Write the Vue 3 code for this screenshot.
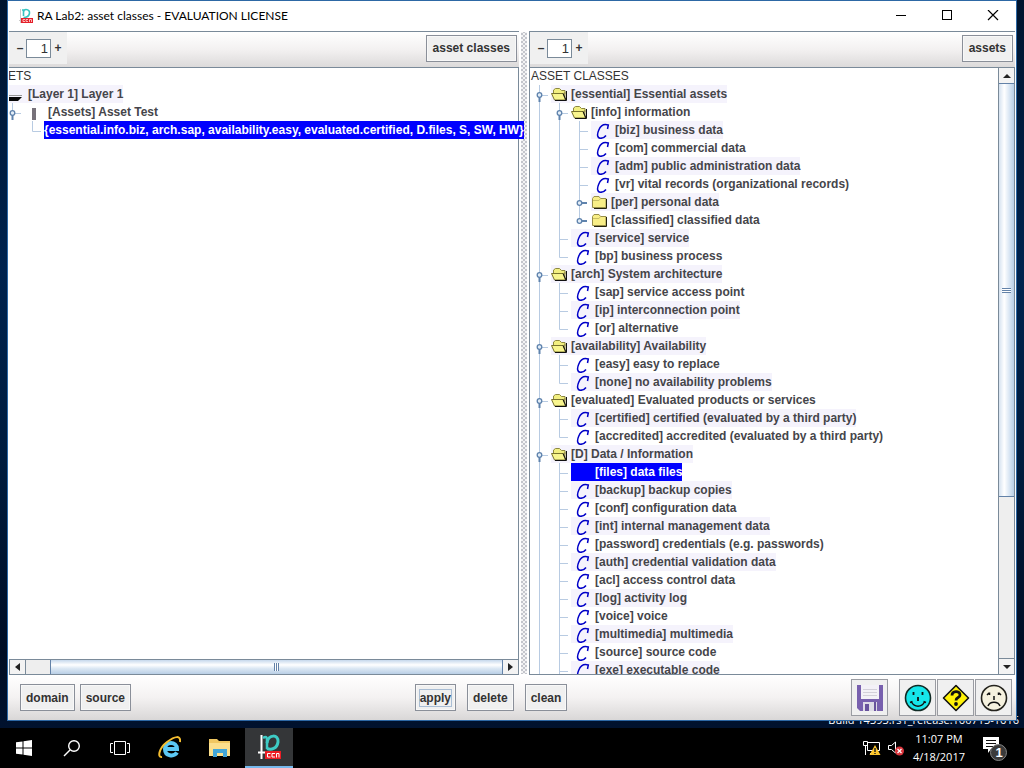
<script setup>
import { ref } from 'vue'

const leftDepth = ref('1')
const rightDepth = ref('1')

// guides: one letter per 20px column.
// v = vertical line, t = branch, l = last branch, o = open handle, h = open handle on a last branch,
// c = closed handle, e = closed handle on a last branch, s = space
const assets = [
  { guides: '', kind: 'root', text: 'ASSETS' },
  { guides: 's', kind: 'layer', text: '[Layer 1] Layer 1', tint: true },
  { guides: 'sh', kind: 'asset', text: '[Assets] Asset Test' },
  { guides: 'ssl', kind: 'plain', text: '{essential.info.biz, arch.sap, availability.easy, evaluated.certified, D.files, S, SW, HW}', selected: true },
]

const classes = [
  { guides: '', kind: 'root', text: 'ASSET CLASSES' },
  { guides: 'o', kind: 'open', text: '[essential] Essential assets', tint: true },
  { guides: 'vo', kind: 'open', text: '[info] information' },
  { guides: 'vvt', kind: 'leaf', text: '[biz] business data', tint: true },
  { guides: 'vvt', kind: 'leaf', text: '[com] commercial data' },
  { guides: 'vvt', kind: 'leaf', text: '[adm] public administration data', tint: true },
  { guides: 'vvt', kind: 'leaf', text: '[vr] vital records (organizational records)' },
  { guides: 'vvc', kind: 'closed', text: '[per] personal data', tint: true },
  { guides: 'vve', kind: 'closed', text: '[classified] classified data' },
  { guides: 'vt', kind: 'leaf', text: '[service] service', tint: true },
  { guides: 'vl', kind: 'leaf', text: '[bp] business process' },
  { guides: 'o', kind: 'open', text: '[arch] System architecture', tint: true },
  { guides: 'vt', kind: 'leaf', text: '[sap] service access point' },
  { guides: 'vt', kind: 'leaf', text: '[ip] interconnection point', tint: true },
  { guides: 'vl', kind: 'leaf', text: '[or] alternative' },
  { guides: 'o', kind: 'open', text: '[availability] Availability', tint: true },
  { guides: 'vt', kind: 'leaf', text: '[easy] easy to replace' },
  { guides: 'vl', kind: 'leaf', text: '[none] no availability problems', tint: true },
  { guides: 'o', kind: 'open', text: '[evaluated] Evaluated products or services' },
  { guides: 'vt', kind: 'leaf', text: '[certified] certified (evaluated by a third party)', tint: true },
  { guides: 'vl', kind: 'leaf', text: '[accredited] accredited (evaluated by a third party)' },
  { guides: 'o', kind: 'open', text: '[D] Data / Information', tint: true },
  { guides: 'vt', kind: 'leaf', text: '[files] data files', selected: true },
  { guides: 'vt', kind: 'leaf', text: '[backup] backup copies', tint: true },
  { guides: 'vt', kind: 'leaf', text: '[conf] configuration data' },
  { guides: 'vt', kind: 'leaf', text: '[int] internal management data', tint: true },
  { guides: 'vt', kind: 'leaf', text: '[password] credentials (e.g. passwords)' },
  { guides: 'vt', kind: 'leaf', text: '[auth] credential validation data', tint: true },
  { guides: 'vt', kind: 'leaf', text: '[acl] access control data' },
  { guides: 'vt', kind: 'leaf', text: '[log] activity log', tint: true },
  { guides: 'vt', kind: 'leaf', text: '[voice] voice' },
  { guides: 'vt', kind: 'leaf', text: '[multimedia] multimedia', tint: true },
  { guides: 'vt', kind: 'leaf', text: '[source] source code' },
  { guides: 'vt', kind: 'leaf', text: '[exe] executable code', tint: true },
]

const panes = [
  { id: 'assets', depth: leftDepth, button: 'asset classes', rows: assets },
  { id: 'classes', depth: rightDepth, button: 'assets', rows: classes },
]

const linePaths = {
  v: 'M8.5 0V18',
  t: 'M8.5 0V18M8.5 10.5H17',
  l: 'M8.5 0V10.5H17',
  o: 'M8.5 0V18M11 10.5H17',
  h: 'M8.5 0V8M11 10.5H17',
  c: 'M8.5 0V18',
  e: 'M8.5 0V10',
  s: '',
}
</script>

<template>
  <div class="desktop">
    <p class="watermark">Build 14393.rs1_release.160715-1616</p>
    <section class="window">
      <header class="titlebar">
        <svg class="app-icon" width="15" height="16" viewBox="0 0 15 16" aria-hidden="true">
          <path d="M2.500 1v14M1 12.500h4" stroke="#c9c9c9" fill="none" />
          <path d="M4 2h1.500v6M5.500 9.500c7 0 8-8 2.500-8-1.500 0-2.500 1-2.500 3" stroke="#35c4c0" stroke-width="1.600" fill="none" />
          <rect x="3" y="10" width="12" height="5" fill="#e3202a" />
          <path d="M7 11.500H5v2h2M10 11.500H8v2h2M11.500 14v-2.500h2V14" stroke="#ffb9b9" fill="none" />
        </svg>
        <h1>RA Lab2: asset classes - EVALUATION LICENSE</h1>
        <button class="win-btn" aria-label="Minimize">
          <svg width="12" height="12" viewBox="0 0 12 12"><path d="M1 5.500h10" stroke="#000" /></svg>
        </button>
        <button class="win-btn" aria-label="Maximize">
          <svg width="12" height="12" viewBox="0 0 12 12"><rect x="1.500" y="0.500" width="9" height="9" fill="none" stroke="#000" /></svg>
        </button>
        <button class="win-btn" aria-label="Close">
          <svg width="12" height="12" viewBox="0 0 12 12"><path d="M1 0l10 10M11 0L1 10" stroke="#000" stroke-width="1.200" /></svg>
        </button>
      </header>

      <main class="panes">
        <template v-for="pane in panes" :key="pane.id">
          <div v-if="pane.id === 'classes'" class="splitter" role="separator"></div>
          <section class="pane" :class="pane.id">
            <div class="toolbar">
              <div class="stepper">
                <button class="step" aria-label="Less">–</button>
                <input v-model="pane.depth.value" type="text" aria-label="Depth" />
                <button class="step more" aria-label="More">+</button>
              </div>
              <button class="btn">{{ pane.button }}</button>
            </div>
            <div class="view">
              <div class="clip">
                <ul class="tree" role="tree">
                  <li v-for="row in pane.rows" :key="row.text" class="row" role="treeitem">
                    <svg v-for="(g, i) in row.guides" :key="i" class="guide" width="20" height="18" viewBox="0 0 20 18">
                      <path :d="linePaths[g]" fill="none" stroke="#b8cbe2" />
                      <template v-if="g === 'o' || g === 'h'">
                        <path d="M8.500 12v5" stroke="#5f83ad" stroke-width="2" />
                        <circle cx="8.500" cy="10" r="2.300" fill="#e4eef8" stroke="#5f83ad" stroke-width="1.300" />
                      </template>
                      <template v-if="g === 'c' || g === 'e'">
                        <path d="M10 10h6" stroke="#5f83ad" stroke-width="2" />
                        <circle cx="8.500" cy="10" r="2.300" fill="#e4eef8" stroke="#5f83ad" stroke-width="1.300" />
                      </template>
                    </svg>
                    <span class="label" :class="[row.kind, { tint: row.tint, selected: row.selected }]">
                      <svg v-if="row.kind === 'open'" width="20" height="18" viewBox="0 0 20 18">
                        <path d="M2.500 9V5L4.500 3.500h4L10.500 5.500h3.500V9" fill="#f2ef80" stroke="#8d8840" />
                        <path d="M.5 8.500h11.500l2.500 6.500H3.500z" fill="#f8f58e" stroke="#77722e" />
                        <path d="M14.500 6.500v8.500L12 8.500" fill="#99944a" />
                        <path d="M15.500 6v9.500H4M12 8.500l3 6.500" fill="none" stroke="#111" />
                      </svg>
                      <svg v-else-if="row.kind === 'closed'" width="20" height="18" viewBox="0 0 20 18">
                        <path d="M1.500 14.500v-9l1.500-2h5l1.500 2h5.500v9z" fill="#f8ee87" stroke="#99904b" />
                        <path d="M2 7.500h6l1.500-2" fill="none" stroke="#c9bf65" />
                        <path d="M15.500 6v9.500H3" fill="none" stroke="#24220e" />
                      </svg>
                      <svg v-else-if="row.kind === 'leaf'" width="24" height="18" viewBox="0 0 24 18">
                        <path v-if="!row.selected" d="M16.500 8l.8-4C12.500 2.500 9.500 5 7.800 9C5.600 14 6.500 17.300 9.500 17.300C12 17.300 13.500 16.500 15 14.500" fill="none" stroke="#0000c8" stroke-width="1.500" />
                      </svg>
                      <svg v-else-if="row.kind === 'layer'" width="24" height="18" viewBox="0 0 24 18">
                        <path d="M4 10.500h14" stroke="#999" />
                        <path d="M4 12h14l-4 4H5z" fill="#080808" />
                      </svg>
                      <svg v-else-if="row.kind === 'asset'" width="24" height="18" viewBox="0 0 24 18">
                        <path d="M8 5h4v12H8z" fill="#77727a" />
                      </svg>
                      <span>{{ row.text }}</span>
                    </span>
                  </li>
                </ul>
              </div>
              <div class="scroll">
                <button aria-label="Scroll back"><i class="arrow back"></i></button>
                <div class="track"><div class="thumb"><i></i></div></div>
                <button aria-label="Scroll forward"><i class="arrow forward"></i></button>
              </div>
            </div>
          </section>
        </template>
      </main>

      <footer class="actions">
        <div class="group">
          <button class="btn">domain</button>
          <button class="btn">source</button>
        </div>
        <div class="group middle">
          <button class="btn focused"><span>apply</span></button>
          <button class="btn">delete</button>
          <button class="btn">clean</button>
        </div>
        <div class="group icons">
          <button class="pic save" aria-label="Save">
            <svg width="28" height="28" viewBox="0 0 28 28">
              <path d="M1 1h26v26H4l-3-3z" fill="#7860ae" />
              <path d="M5 1h18v14H5z" fill="#f3f1f7" />
              <path d="M7 5.500h14M7 8.500h14M7 11.500h14" stroke="#d3d0da" />
              <path d="M7 18h14v9H7z" fill="#dedbe6" />
              <path d="M9 20h4v7H9zM18 18h2v9h-2z" fill="#68529c" />
            </svg>
          </button>
          <button class="pic" aria-label="Satisfied">
            <svg width="28" height="28" viewBox="0 0 28 28">
              <circle cx="14" cy="14" r="12.500" fill="#16e6ea" stroke="#102a24" stroke-width="1.600" />
              <path d="M9.500 8v3M18.500 8v3M14 13v4" stroke="#111" stroke-width="1.800" />
              <path d="M7.500 18c3 5.500 10 5.500 13 0M6 18.500l2.500-1M22 18.500l-2.500-1" fill="none" stroke="#111" stroke-width="1.500" />
            </svg>
          </button>
          <button class="pic" aria-label="Help">
            <svg width="28" height="28" viewBox="0 0 28 28">
              <path d="M14 1.500L26.500 14 14 26.500 1.500 14z" fill="#fff208" stroke="#111" stroke-width="1.600" stroke-linejoin="round" />
              <path d="M10 11.500c0-5 8-5 8-.500 0 3-4 2-4 5.500" fill="none" stroke="#111" stroke-width="2.800" />
              <circle cx="14" cy="20" r="1.900" fill="#111" />
            </svg>
          </button>
          <button class="pic" aria-label="Dissatisfied">
            <svg width="28" height="28" viewBox="0 0 28 28">
              <circle cx="14" cy="14" r="12.500" fill="#f6f2df" stroke="#24231d" stroke-width="1.600" />
              <path d="M9.500 8.500v2.500M18.500 8.500v2.500M14 12v4M7 11l2-2M21 11l-2-2" stroke="#111" stroke-width="1.500" />
              <path d="M8 22c2-5 10-5 12 0" fill="none" stroke="#111" stroke-width="1.600" />
            </svg>
          </button>
        </div>
      </footer>
    </section>

    <nav class="taskbar">
      <button class="task" aria-label="Start">
        <svg width="16" height="16" viewBox="0 0 16 16"><path d="M0 2.300l6.500-.9v6.100H0zM7.500 1.200L16 0v7.500H7.500zM0 8.500h6.500v6.100L0 13.700zM7.500 8.500H16V16l-8.500-1.200z" fill="#fff" /></svg>
      </button>
      <button class="task" aria-label="Search">
        <svg width="18" height="18" viewBox="0 0 18 18"><circle cx="11" cy="7" r="5.300" fill="none" stroke="#fff" stroke-width="1.400" /><path d="M7 11l-6 6" stroke="#fff" stroke-width="1.500" /></svg>
      </button>
      <button class="task" aria-label="Task view">
        <svg width="20" height="16" viewBox="0 0 20 16"><path d="M4.500 1.500h11v13h-11zM3 3.500H.5v9H3M17 3.500h2.500v9H17" fill="none" stroke="#fff" /></svg>
      </button>
      <button class="task wide" aria-label="Internet Explorer">
        <svg width="24" height="24" viewBox="0 0 24 24">
          <path d="M8 13h12c0-8-12-8-12 0 0 7.500 9 8 12 3.500" fill="none" stroke="#5cc8f4" stroke-width="4" />
          <path d="M5 21C0 22 2 12 10 6S24-1 23 6" fill="none" stroke="#f4bd30" stroke-width="2" />
        </svg>
      </button>
      <button class="task wide" aria-label="File Explorer">
        <svg width="24" height="24" viewBox="0 0 24 24">
          <path d="M2 3h8l2 2h11v15H2z" fill="#f0c761" />
          <path d="M2 7h21v13H2z" fill="#fbdf8c" />
          <path d="M6 21v-8h14v8h-4v-4h-6v4z" fill="#42a6d8" />
        </svg>
      </button>
      <button class="task wide active" aria-label="RA Lab2">
        <svg width="26" height="26" viewBox="0 0 26 26">
          <path d="M5.500 1v24M2 18.500h7" stroke="#fff" stroke-width="2" />
          <path d="M7 4c3-2 4-1 4 2v9" fill="none" stroke="#3ecbc5" stroke-width="2.500" />
          <path d="M11 9c1-9 12-9 11-1-1 7-7 8-11 6.500" fill="none" stroke="#3ecbc5" stroke-width="3" />
          <rect x="9" y="17" width="16" height="8" fill="#ed1c24" />
          <path d="M14.500 19.500h-3v3.500h3M19 19.500h-3v3.500h3M20.500 23.500v-4h2.500v4" fill="none" stroke="#fff" />
        </svg>
      </button>
      <div class="tray">
        <svg width="18" height="16" viewBox="0 0 18 16">
          <path d="M4.500 2.500h12v8h-12zM7 13.500h5M10 11v3M.5 1.500h4v4h-4zM2.500 6v9" fill="none" stroke="#fff" />
          <path d="M12 5l5.500 10h-11z" fill="#fdc62d" />
          <path d="M12 8v4M12 13v1" stroke="#222" stroke-width="1.500" />
        </svg>
        <svg width="16" height="16" viewBox="0 0 16 16">
          <path d="M.5 5.500h3L7.500 2v11l-4-3.500h-3z" fill="none" stroke="#fff" />
          <circle cx="11.500" cy="11" r="4.500" fill="#d9343b" />
          <path d="M9.500 9l4 4M13.500 9l-4 4" stroke="#fff" stroke-width="1.200" />
        </svg>
        <time class="clock"><span>11:07 PM</span><span>4/18/2017</span></time>
        <button class="notice" aria-label="Notifications">
          <svg width="26" height="26" viewBox="0 0 26 26">
            <path d="M1 2h16v12H9l-3 4v-4H1z" fill="#fff" />
            <path d="M4 5.500h10M4 8.500h10M4 11.500h7" stroke="#111" />
            <circle cx="16.500" cy="17.500" r="8" fill="#3a3a3a" stroke="#858585" />
          </svg>
          <b>1</b>
        </button>
      </div>
    </nav>
  </div>
</template>

<style>
body { margin: 0; }
</style>

<style scoped>
* { box-sizing: border-box; }
button { padding: 0; margin: 0; border: 0; background: none; font: inherit; color: inherit; }
svg { display: block; flex: none; }

.desktop {
  position: relative;
  display: flex;
  flex-direction: column;
  height: 100vh;
  overflow: hidden;
  background: linear-gradient(#00142e, #00234e 35%, #001c3e 60%, #000d24 85%, #001433);
  font-family: "Liberation Sans", Arial, sans-serif;
  font-size: 12px;
  color: #333;
}
.watermark {
  position: absolute;
  right: 5px;
  bottom: 40px;
  margin: 0;
  font: 11px/16px "Open Sans", sans-serif;
  color: #fff;
}
.window {
  position: relative;
  flex: 1;
  min-height: 0;
  display: flex;
  flex-direction: column;
  margin: 0 7px 7px;
  border: 1px solid #2d68a5;
  background: #fff;
}
.titlebar { display: flex; align-items: center; height: 30px; flex: none; padding-left: 10px; }
.titlebar h1 {
  flex: 1;
  margin: 0 0 0 4px;
  font: 12px/16px Lato, sans-serif;
  color: #000;
}
.win-btn { width: 46px; height: 30px; display: grid; place-items: center; }

.panes {
  flex: 1;
  min-height: 0;
  display: grid;
  grid-template-columns: minmax(0, 510fr) 10px minmax(0, 486fr);
  grid-template-rows: minmax(0, 1fr);
  padding: 0 1px;
}
.splitter {
  background-color: #f3f3f4;
  background-image: radial-gradient(circle at 1px 1px, #c3c5cc 0 1px, transparent 1px), radial-gradient(circle at 3px 3px, #c3c5cc 0 1px, transparent 1px);
  background-size: 4px 4px;
  background-clip: content-box;
  padding: 1px 2px;
}
.pane { display: flex; flex-direction: column; min-height: 0; border-top: 1px solid #7a8a99; }
.toolbar {
  display: flex;
  justify-content: space-between;
  align-items: center;
  height: 35px;
  flex: none;
  padding: 0 2px 3px 0;
  background: linear-gradient(#fff, #f3f1f1 50%, #dcdada);
}
.classes .toolbar { border-left: 1px solid #7a8a99; }
.stepper { display: flex; align-items: center; height: 32px; width: 58px; padding-left: 5px; background: #f0f0f0; }
.step { width: 12px; font-weight: bold; text-align: center; }
.step.more { width: 14px; }
.stepper input {
  width: 25px;
  height: 19px;
  padding: 0 2px;
  border: 1px solid #7a8a99;
  background: #fff;
  font: 13px/17px "Liberation Sans", Arial, sans-serif;
  color: #333;
  text-align: right;
}
.btn {
  height: 27px;
  padding: 0 5px;
  border: 1px solid #8a8f99;
  background: #f0f0f0;
  box-shadow: inset 0 0 0 1px #f8f8f8;
  font-size: 12px;
  font-weight: bold;
}
.toolbar .btn { padding: 0 6px; }
.btn.focused { padding: 0 3px; }
.btn.focused span { display: block; border: 1px solid #a9bdd4; line-height: 16px; }

.view { flex: 1; min-height: 0; display: flex; border-top: 1px solid #7a8a99; }
.assets .view { flex-direction: column; border-right: 1px solid #7a8a99; }
.classes .view { border-left: 1px solid #7a8a99; border-bottom: 1px solid #7a8a99; }
.clip { flex: 1; min-width: 0; min-height: 0; overflow: hidden; }
.assets .clip { z-index: 1; margin-right: -8px; }
.tree { list-style: none; margin: -1px 0 0 1px; padding: 0; }
.assets .tree { margin-left: -25px; }
.row { display: flex; height: 18px; line-height: 18px; white-space: nowrap; }
.label { display: flex; font-weight: bold; color: #45454a; }
.label.root { font-weight: normal; color: #333; }
.label.tint { background: #f5f3fc; }
.label.selected { background: #0000fe; color: #fff; }

.scroll { display: flex; flex: none; background: #eee; }
.scroll button { flex: none; width: 16px; height: 15px; display: grid; place-items: center; background: #f3f3f3; }
.track { flex: 1; display: flex; }
.thumb { display: grid; place-items: center; border: 1px solid #6382a8; }
.arrow { width: 0; height: 0; border: 4px solid transparent; }
.assets .scroll { border-top: 1px solid #7a8a99; border-bottom: 1px solid #7a8a99; border-left: 1px solid #7a8a99; height: 16px; }
.assets .scroll button { width: 15px; height: 14px; }
.assets .track { justify-content: flex-end; border-left: 1px solid #7a8a99; }
.assets .thumb { width: 95%; border-width: 0 1px; background: linear-gradient(#c6d8ec, #fff 35%, #dce8f4 60%, #b9cfe6); }
.assets .thumb i { width: 5px; height: 8px; background: repeating-linear-gradient(90deg, #6382a8 0 1px, #fff 1px 2px); }
.assets .back { border-left-width: 0; border-right: 5px solid #222; }
.assets .forward { border-right-width: 0; border-left: 5px solid #222; }
.classes .scroll { flex-direction: column; width: 17px; border-left: 1px solid #7a8a99; border-right: 1px solid #7a8a99; }
.classes .scroll button { width: 15px; }
.classes .track { flex-direction: column; border-bottom: 1px solid #7a8a99; }
.classes .thumb { height: 72%; border-width: 1px 0; background: linear-gradient(90deg, #d5e2f0, #fff 35%, #d8e5f3 70%, #b9cfe6); }
.classes .thumb i { width: 9px; height: 5px; background: repeating-linear-gradient(#6382a8 0 1px, #fff 1px 2px); }
.classes .back { border-top-width: 0; border-bottom: 4px solid #222; }
.classes .forward { border-bottom-width: 0; border-top: 4px solid #222; }

.actions {
  display: flex;
  justify-content: space-between;
  align-items: center;
  height: 45px;
  flex: none;
  padding: 0 4px 0 12px;
  background: linear-gradient(#fff, #f4f2f2 50%, #d9d7d7);
}
.group { display: flex; align-items: center; gap: 5px; }
.group.middle { gap: 11px; }
.group.icons { gap: 1px; }
.pic { width: 37px; height: 37px; display: grid; place-items: center; border: 1px solid #9a9ca2; background: #f0f0f0; }
.pic.save { margin-right: 10px; }

.taskbar { position: relative; display: flex; height: 40px; flex: none; background: #000; color: #fff; }
.task { width: 48px; display: grid; place-items: center; }
.task.wide { width: 50px; }
.task.active { width: 48px; margin-left: 1px; background: #343638; border-bottom: 2px solid #76b9ed; }
.tray { display: flex; align-items: center; gap: 7px; margin-left: auto; padding-right: 16px; }
.clock { display: flex; flex-direction: column; align-items: center; margin: 0 10px 0 2px; font: 11px/18px "Open Sans", sans-serif; }
.notice { position: relative; width: 26px; height: 26px; }
.notice b { position: absolute; left: 9px; top: 9px; width: 16px; font-size: 13px; line-height: 17px; text-align: center; }
</style>
